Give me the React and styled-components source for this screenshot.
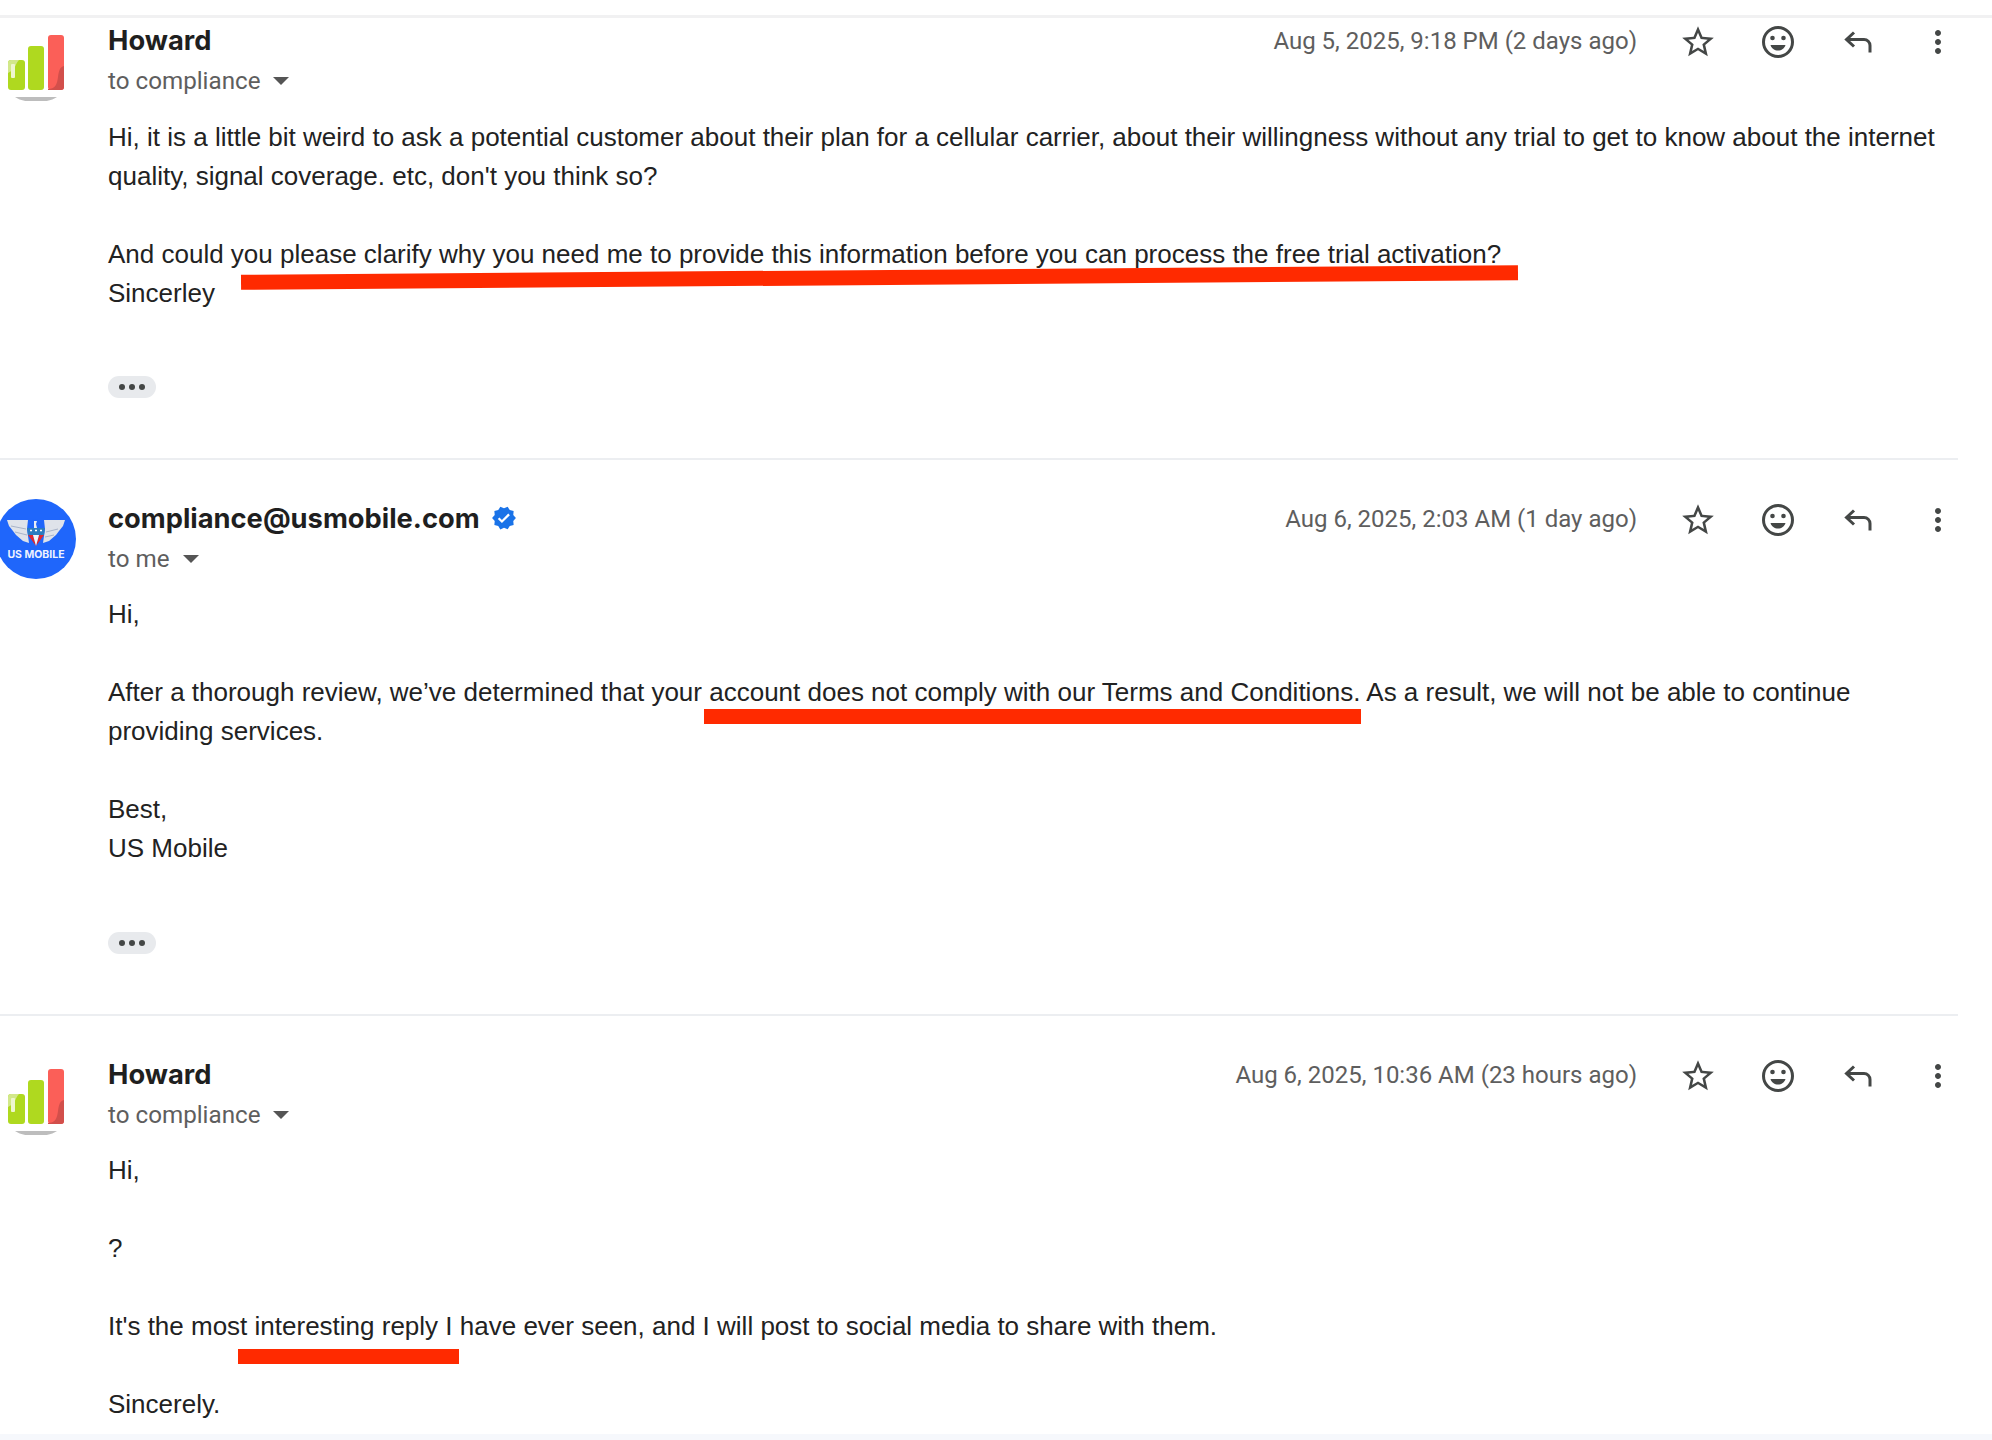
import React from 'react'
import styled, { createGlobalStyle } from 'styled-components'
import { MdStarBorder, MdMoreVert, MdVerified } from 'react-icons/md'

const GlobalStyle = createGlobalStyle`
  html, body {
    margin: 0;
    padding: 0;
    background: #fff;
  }
`

const threads = [
  {
    id: 1,
    sender: 'Howard',
    recipient: 'to compliance',
    date: 'Aug 5, 2025, 9:18 PM (2 days ago)',
    avatar: 'bars',
    top: 5,
    bodyGap: 17,
    pillGap: 63,
    trimmed: true,
    paragraphs: [
      [
        "Hi, it is a little bit weird to ask a potential customer about their plan for a cellular carrier, about their willingness without any trial to get to know about the internet",
        "quality, signal coverage. etc, don't you think so?",
      ],
      [
        'And could you please clarify why you need me to provide this information before you can process the free trial activation?',
        'Sincerley',
      ],
    ],
    strokes: [{ left: 241, top: 254, width: 1277, tilt: -0.43 }],
  },
  {
    id: 2,
    sender: 'compliance@usmobile.com',
    verified: true,
    recipient: 'to me',
    date: 'Aug 6, 2025, 2:03 AM (1 day ago)',
    avatar: 'usmobile',
    top: 39,
    bodyGap: 16,
    pillGap: 64,
    trimmed: true,
    paragraphs: [
      ['Hi,'],
      [
        'After a thorough review, we’ve determined that your account does not comply with our Terms and Conditions. As a result, we will not be able to continue',
        'providing services.',
      ],
      ['Best,', 'US Mobile'],
    ],
    strokes: [{ left: 704, top: 249, width: 657, tilt: 0 }],
  },
  {
    id: 3,
    sender: 'Howard',
    recipient: 'to compliance',
    date: 'Aug 6, 2025, 10:36 AM (23 hours ago)',
    avatar: 'bars',
    top: 39,
    bodyGap: 16,
    paragraphs: [
      ['Hi,'],
      ['?'],
      ["It's the most interesting reply I have ever seen, and I will post to social media to share with them."],
      ['Sincerely.'],
    ],
    strokes: [{ left: 238, top: 333, width: 221, tilt: 0 }],
  },
]

function BarsLogo() {
  return (
    <svg width="80" height="80" viewBox="0 0 80 80">
      <rect x="12" y="39" width="17" height="30" rx="3" fill="#afd91f" />
      <path d="M12 52v-10a3 3 0 0 1 3-3h8c-3 3-4 8-6 10z" fill="#d2e88a" />
      <rect x="15" y="43" width="4" height="14" rx="1" fill="#eef6cf" />
      <rect x="32" y="25" width="16" height="44" rx="3" fill="#afd91f" />
      <rect x="52" y="14" width="16" height="55" rx="3" fill="#fb5f58" />
      <path d="M68 45v21a3 3 0 0 1-3 3H52v-1c7 0 9-4 10-12 1-7 2-10 6-11z" fill="#d24f4b" />
      <path d="M19 76h42c-5 3.500-13 5-21 5s-16-1.500-21-5z" fill="#bdbdbd" />
    </svg>
  )
}

function UsMobileLogo() {
  return (
    <svg width="80" height="80" viewBox="0 0 80 80">
      <circle cx="40" cy="40" r="40" fill="#1f66fb" />
      <path d="M11 21h21l-1 9 2 14-6-2-7-6-3-4-4-5z" fill="#dfe3ea" />
      <path d="M69 21H48l1 9-2 14 6-2 7-6 3-4 4-5z" fill="#dfe3ea" />
      <path d="M15 27l15 3M19 33l12 3M62 30l-12 3M58 36l-9 2" stroke="#a9b4c9" strokeWidth="1" />
      <path d="M36 21l5-1 3 3-2 6h-6z" fill="#1f66fb" />
      <path d="M38 22h3l-1 3 1 4h-3z" fill="#e8edf5" />
      <path d="M31 29h18l-1 7H32z" fill="#2b7cc0" />
      <path d="M34 31.500h2M39 31.500h2M44 31.500h2" stroke="#fff" strokeWidth="1.500" />
      <path d="M32 36h5l3 11z" fill="#e0262f" />
      <path d="M48 36h-5l-3 11z" fill="#e0262f" />
      <path d="M37 36h6l-3 11z" fill="#f4f5f7" />
      <text x="40" y="59" textAnchor="middle" fontFamily="Inter, sans-serif" fontWeight="700" fontSize="10.500" fill="#eef3ff">
        US MOBILE
      </text>
    </svg>
  )
}

function SmileIcon() {
  return (
    <svg width="34" height="34" viewBox="0 0 34 34">
      <circle cx="17" cy="17" r="14.500" fill="none" stroke="#444746" strokeWidth="3" />
      <circle cx="11.500" cy="13" r="2.300" fill="#444746" />
      <circle cx="22.500" cy="13" r="2.300" fill="#444746" />
      <path d="M9.500 20h15c-1 3.500-4 5.500-7.500 5.500S10.500 23.500 9.500 20z" fill="#444746" />
    </svg>
  )
}

function ReplyIcon() {
  return (
    <svg width="28" height="22" viewBox="0 0 28 22">
      <path
        d="M10 1.500 2.500 8.500l7.500 7M2.500 8.500H20a6 6 0 0 1 6 6V21.500"
        fill="none"
        stroke="#444746"
        strokeWidth="3"
      />
    </svg>
  )
}

function Message({ thread }) {
  return (
    <MessageRow $top={thread.top}>
      <Avatar>{thread.avatar === 'bars' ? <BarsLogo /> : <UsMobileLogo />}</Avatar>
      <Content>
        <Header $gap={thread.bodyGap}>
          <Who>
            <NameRow>
              <Name>{thread.sender}</Name>
              {thread.verified && <MdVerified size={26} color="#1a73e8" />}
            </NameRow>
            <ToRow>
              {thread.recipient}
              <Caret />
            </ToRow>
          </Who>
          <Actions>
            <Date>{thread.date}</Date>
            <IconButton><MdStarBorder size={38} /></IconButton>
            <IconButton><SmileIcon /></IconButton>
            <IconButton><ReplyIcon /></IconButton>
            <IconButton><MdMoreVert size={36} /></IconButton>
          </Actions>
        </Header>
        <Body>
          {thread.paragraphs.map((lines, i) => (
            <Paragraph key={i}>
              {lines.map((line) => (
                <Line key={line}>{line}</Line>
              ))}
            </Paragraph>
          ))}
        </Body>
        {thread.trimmed && (
          <MorePill $gap={thread.pillGap}>
            <Dot />
            <Dot />
            <Dot />
          </MorePill>
        )}
      </Content>
      {thread.strokes.map((s) => (
        <RedStroke key={s.left} $left={s.left} $top={s.top} $width={s.width} $tilt={s.tilt} />
      ))}
    </MessageRow>
  )
}

export default function App() {
  return (
    <Page>
      <GlobalStyle />
      <TopEdge />
      {threads.map((thread, i) => (
        <React.Fragment key={thread.id}>
          <Message thread={thread} />
          {i < threads.length - 1 && <Divider />}
        </React.Fragment>
      ))}
      <BottomEdge />
    </Page>
  )
}

const Page = styled.div`
  position: relative;
  width: 1992px;
  height: 1440px;
  overflow: hidden;
  background: #fff;
  display: flex;
  flex-direction: column;
`

const TopEdge = styled.div`
  height: 15px;
  flex: none;
  border-bottom: 3px solid #f1f1f2;
  box-sizing: content-box;
  margin-bottom: -2px;
`

const BottomEdge = styled.div`
  position: absolute;
  left: 0;
  right: 0;
  bottom: 0;
  height: 6px;
  background: #f6f8fc;
`

const Divider = styled.div`
  flex: none;
  height: 2px;
  margin-right: 34px;
  background: #eceef1;
`

const MessageRow = styled.div`
  position: relative;
  flex: none;
  display: flex;
  gap: 32px;
  padding: ${(p) => p.$top}px 14px 60px 0;
`

const Avatar = styled.div`
  flex: none;
  width: 80px;
  height: 80px;
  margin-left: -4px;
`

const Content = styled.div`
  flex: 1;
  min-width: 0;
`

const Header = styled.div`
  display: flex;
  justify-content: space-between;
  height: 80px;
  margin-bottom: ${(p) => p.$gap}px;
`

const Who = styled.div`
  display: flex;
  flex-direction: column;
`

const NameRow = styled.div`
  display: flex;
  align-items: center;
  gap: 11px;
  height: 38px;
  margin-bottom: 2px;
`

const Name = styled.span`
  font-family: Inter, Roboto, sans-serif;
  font-weight: 700;
  font-size: 27.3px;
  color: #1f1f1f;
`

const ToRow = styled.div`
  display: flex;
  align-items: center;
  gap: 13px;
  height: 40px;
  font-family: Roboto, sans-serif;
  font-size: 24.2px;
  color: #5e5e5e;
`

const Caret = styled.span`
  width: 0;
  height: 0;
  border-left: 8px solid transparent;
  border-right: 8px solid transparent;
  border-top: 8px solid #555;
`

const Actions = styled.div`
  display: flex;
  align-items: flex-start;
  height: 40px;
`

const Date = styled.span`
  height: 40px;
  line-height: 40px;
  margin-right: 21px;
  font-family: Roboto, sans-serif;
  font-size: 24px;
  color: #5e5e5e;
`

const IconButton = styled.span`
  width: 80px;
  height: 42px;
  display: flex;
  align-items: center;
  justify-content: center;
  color: #444746;
`

const Body = styled.div`
  font-family: 'Liberation Sans', Arial, sans-serif;
  font-size: 26px;
  line-height: 39px;
  color: #222;
`

const Paragraph = styled.div`
  margin-bottom: 39px;

  &:last-child {
    margin-bottom: 0;
  }
`

const Line = styled.div`
  white-space: nowrap;
`

const MorePill = styled.div`
  display: flex;
  align-items: center;
  justify-content: center;
  gap: 4px;
  width: 48px;
  height: 22px;
  margin-top: ${(p) => p.$gap}px;
  border-radius: 11px;
  background: #e8eaed;
`

const Dot = styled.span`
  width: 6px;
  height: 6px;
  border-radius: 50%;
  background: #444746;
`

const RedStroke = styled.div`
  position: absolute;
  left: ${(p) => p.$left}px;
  top: ${(p) => p.$top}px;
  width: ${(p) => p.$width}px;
  height: 15px;
  background: #ff2a00;
  transform: rotate(${(p) => p.$tilt}deg);
`
